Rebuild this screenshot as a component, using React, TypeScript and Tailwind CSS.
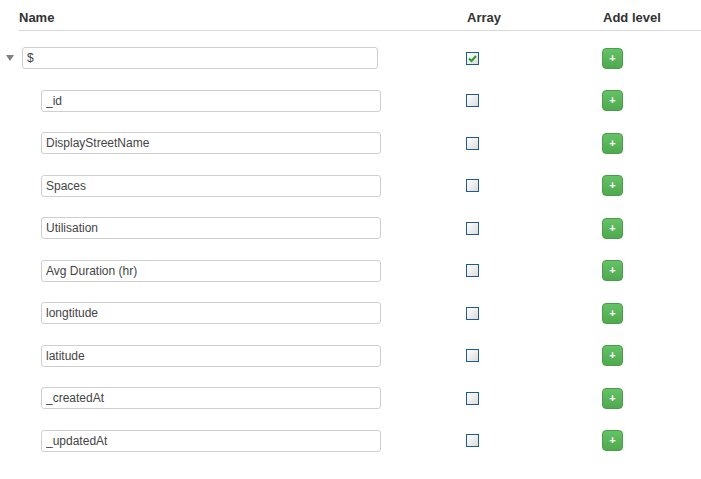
import React from 'react';

const fields = [
  '_id',
  'DisplayStreetName',
  'Spaces',
  'Utilisation',
  'Avg Duration (hr)',
  'longtitude',
  'latitude',
  '_createdAt',
  '_updatedAt',
];

const Checkbox = ({ checked }: { checked?: boolean }) => (
  <span className="block w-[13px] h-[13px] border border-[#1f5a92] bg-gradient-to-br from-white to-[#dcdcdc] relative">
    {checked && (
      <svg viewBox="0 0 11 11" className="absolute inset-0 w-[11px] h-[11px]">
        <path d="M2 5.5 L4.5 8 L9 3" fill="none" stroke="#2c9a2c" strokeWidth="2" />
      </svg>
    )}
  </span>
);

const AddButton = () => (
  <button className="w-[21px] h-[21px] rounded-[4px] bg-gradient-to-b from-[#66c266] to-[#4fa94f] border border-[#4a9e4a] text-white text-[11px] font-bold leading-none flex items-center justify-center">
    +
  </button>
);

const Row = ({ label, root }: { label: string; root?: boolean }) => (
  <div className="grid grid-cols-[466px_136px_1fr] h-[42.5px] items-center">
    <div className="flex items-center">
      {root ? (
        <>
          <span className="ml-[6px] mr-[8px] w-0 h-0 border-l-[4px] border-r-[4px] border-t-[6px] border-l-transparent border-r-transparent border-t-[#808080]" />
          <input
            readOnly
            value={label}
            className="w-[356px] h-[22px] border border-[#cfcfcf] rounded-[3px] px-[4px] text-[12px] text-[#444] outline-none"
          />
        </>
      ) : (
        <input
          readOnly
          value={label}
          className="ml-[41px] w-[340px] h-[22px] border border-[#cfcfcf] rounded-[3px] px-[4px] text-[12px] text-[#444] outline-none"
        />
      )}
    </div>
    <div>
      <Checkbox checked={root} />
    </div>
    <div>
      <AddButton />
    </div>
  </div>
);

export default function App() {
  return (
    <div className="w-[701px] h-[479px] bg-white font-['Liberation_Sans',Arial,sans-serif]">
      <div className="ml-[19px] h-[31px] border-b border-[#d9d9d9] grid grid-cols-[448px_136px_1fr] items-end pb-[4px] text-[13px] leading-[16px] font-bold text-[#333]">
        <div>Name</div>
        <div>Array</div>
        <div>Add level</div>
      </div>
      <div className="pt-[6px]">
        <Row label="$" root />
        {fields.map((f) => (
          <Row key={f} label={f} />
        ))}
      </div>
    </div>
  );
}
